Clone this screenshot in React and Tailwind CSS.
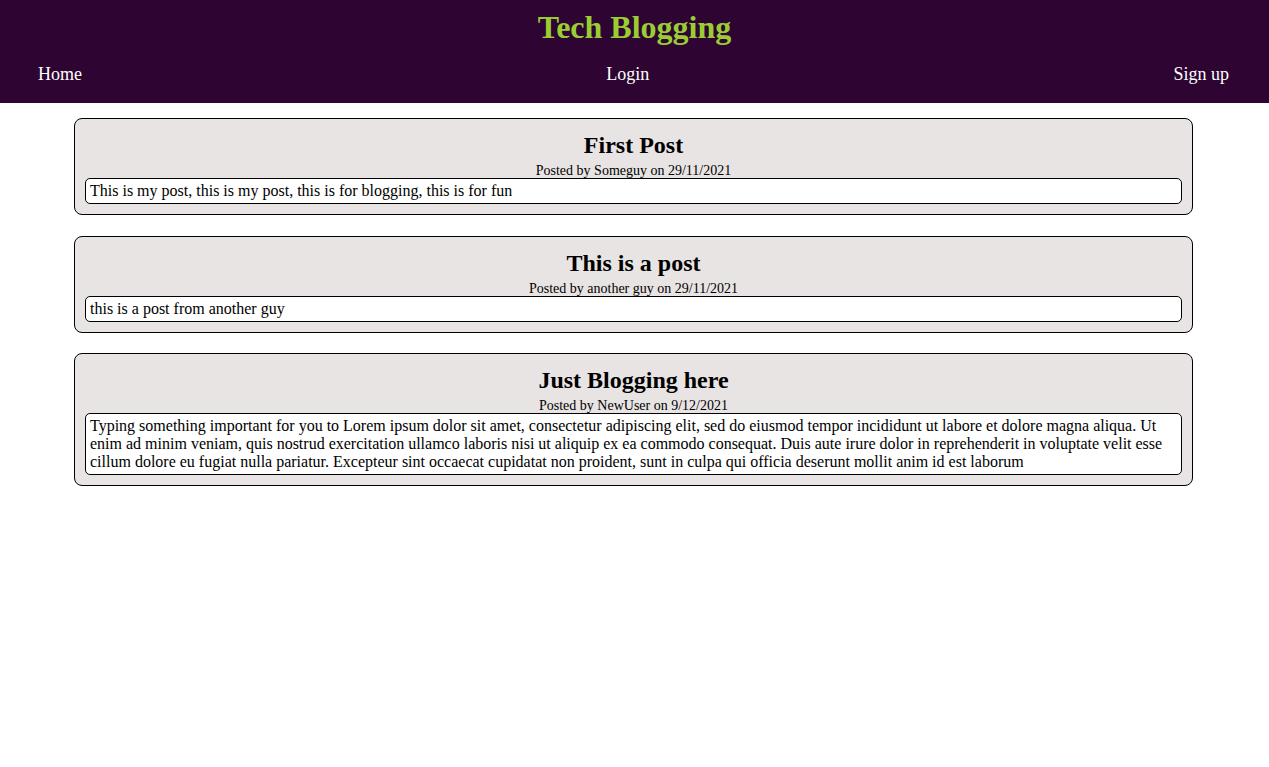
const posts = [
  {
    title: "First Post",
    author: "Someguy",
    date: "29/11/2021",
    body: "This is my post, this is my post, this is for blogging, this is for fun",
  },
  {
    title: "This is a post",
    author: "another guy",
    date: "29/11/2021",
    body: "this is a post from another guy",
  },
  {
    title: "Just Blogging here",
    author: "NewUser",
    date: "9/12/2021",
    body: "Typing something important for you to Lorem ipsum dolor sit amet, consectetur adipiscing elit, sed do eiusmod tempor incididunt ut labore et dolore magna aliqua. Ut enim ad minim veniam, quis nostrud exercitation ullamco laboris nisi ut aliquip ex ea commodo consequat. Duis aute irure dolor in reprehenderit in voluptate velit esse cillum dolore eu fugiat nulla pariatur. Excepteur sint occaecat cupidatat non proident, sunt in culpa qui officia deserunt mollit anim id est laborum",
  },
];

export default function App() {
  return (
    <div className="min-h-screen bg-white text-black font-['Liberation_Serif','Times_New_Roman',serif]">
      {/* Header */}
      <header className="bg-[#2e0433] h-[103px] pt-[10px]">
        <h1 className="text-center text-[32px] leading-[35px] font-bold text-[#9acd32]">Tech Blogging</h1>
        <nav className="flex justify-between pl-[38px] pr-[40px] mt-[19px] text-[18px] leading-[21px] text-white">
          <a href="#">Home</a>
          <a href="#">Login</a>
          <a href="#">Sign up</a>
        </nav>
      </header>

      {/* Posts */}
      <main className="flex flex-col gap-[20.5px] pt-[15px] pl-[74px]">
        {posts.map((p, i) => (
          <div
            key={i}
            className="w-[1119px] bg-[#e8e4e4] border border-black rounded-[8px] px-[10px] pt-[13px] pb-[10px]"
          >
            <h2 className="text-center text-[24px] leading-[27px] font-bold">{p.title}</h2>
            <p className="text-center text-[14px] leading-[15px] mt-[4px]">
              Posted by {p.author} on {p.date}
            </p>
            <div className="bg-white border border-black rounded-[5px] px-[4px] py-[3px] text-[16px] leading-[18px]">
              {p.body}
            </div>
          </div>
        ))}
      </main>
    </div>
  );
}
